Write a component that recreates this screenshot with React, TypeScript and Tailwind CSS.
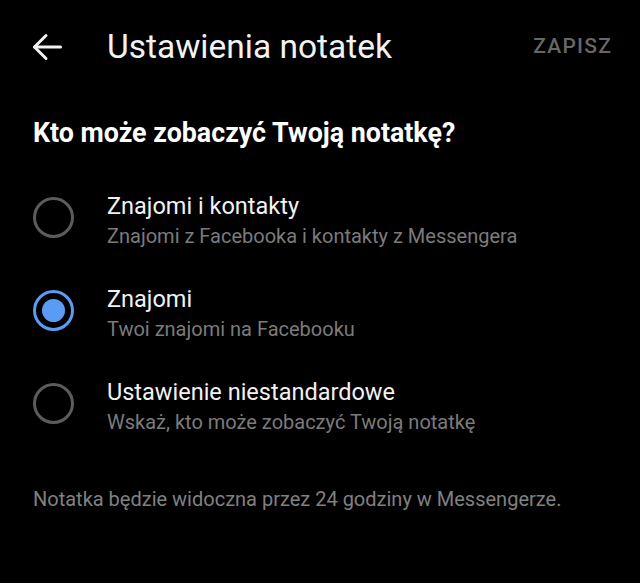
import { useState } from 'react';

const options = [
  { id: 'all', title: 'Znajomi i kontakty', subtitle: 'Znajomi z Facebooka i kontakty z Messengera' },
  { id: 'friends', title: 'Znajomi', subtitle: 'Twoi znajomi na Facebooku' },
  { id: 'custom', title: 'Ustawienie niestandardowe', subtitle: 'Wskaż, kto może zobaczyć Twoją notatkę' },
];

function Radio({ checked }: { checked: boolean }) {
  if (checked) {
    return (
      <div className="w-[41px] h-[41px] rounded-full border-[3px] border-[#5b9bf6] flex items-center justify-center shrink-0">
        <div className="w-[23px] h-[23px] rounded-full bg-[#5b9bf6]" />
      </div>
    );
  }
  return <div className="w-[41px] h-[41px] rounded-full border-[3px] border-[#5c5c5c] shrink-0" />;
}

export default function App() {
  const [selected, setSelected] = useState('friends');

  return (
    <div
      className="w-[640px] h-[583px] bg-black text-[#f2f2f2] overflow-hidden"
      style={{ fontFamily: 'Roboto, "Noto Sans", sans-serif' }}
    >
      <div className="h-[94px] flex items-center pl-[32px] pr-[28px]">
        <svg width="30" height="28" viewBox="0 0 30 28" fill="none" stroke="#f2f2f2" strokeWidth="3" strokeLinecap="round" strokeLinejoin="round">
          <path d="M2.5 14H28.5" />
          <path d="M14 2.5L2.5 14L14 25.5" />
        </svg>
        <h1 className="ml-[45px] text-[33.5px] leading-[40px] flex-1">Ustawienia notatek</h1>
        <button className="text-[21px] font-medium text-[#676767] tracking-[1.2px]">ZAPISZ</button>
      </div>

      <h2 className="mt-[22px] px-[33px] text-[26.8px] leading-[34px] font-bold text-white">
        Kto może zobaczyć Twoją notatkę?
      </h2>

      <div className="mt-[41px] flex flex-col gap-[33px]">
        {options.map((o) => (
          <div key={o.id} className="flex items-start px-[33px] cursor-pointer" onClick={() => setSelected(o.id)}>
            <div className="mt-[6px]">
              <Radio checked={selected === o.id} />
            </div>
            <div className="ml-[33px] flex flex-col">
              <div className="text-[23.5px] leading-[30px]">{o.title}</div>
              <div className="text-[20px] leading-[30px] text-[#7b7b7b]">{o.subtitle}</div>
            </div>
          </div>
        ))}
      </div>

      <p className="mt-[48px] px-[33px] text-[20px] leading-[28px] text-[#808080]">
        Notatka będzie widoczna przez 24 godziny w Messengerze.
      </p>
    </div>
  );
}
